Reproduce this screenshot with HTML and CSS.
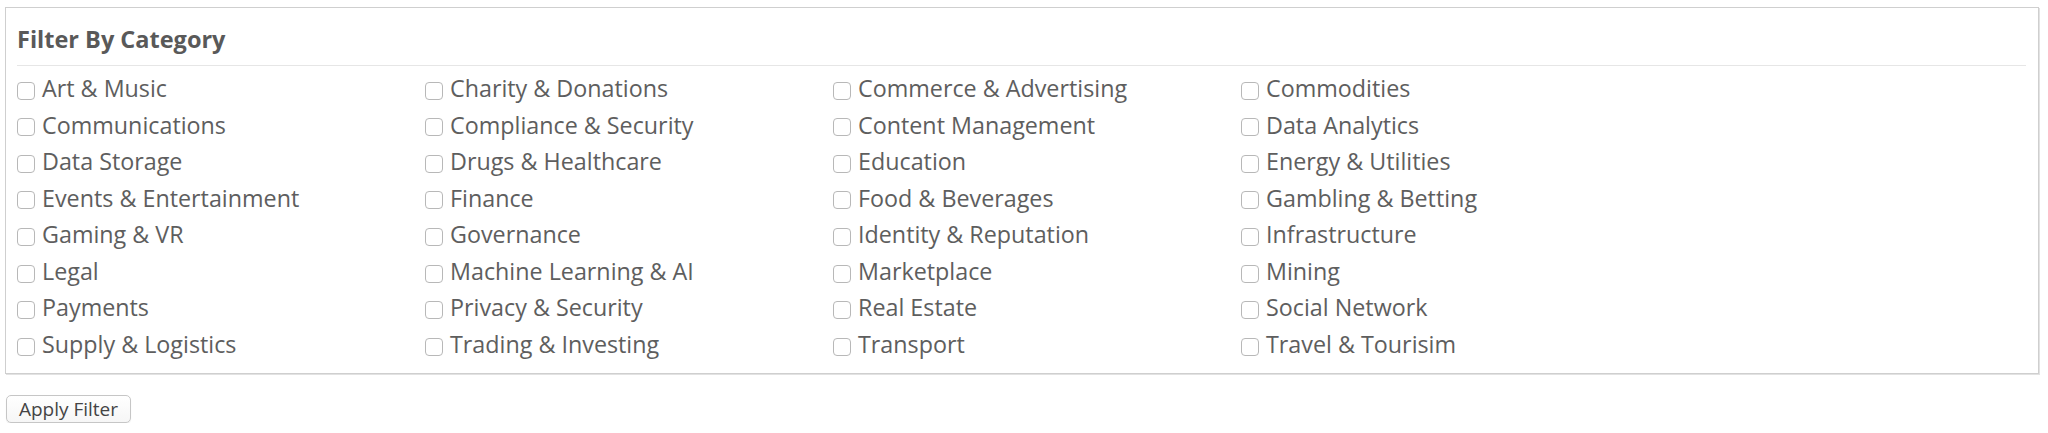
FILE: index.html
```html
<!DOCTYPE html>
<html lang="en">
<head>
    <meta charset="UTF-8">
    <meta name="viewport" content="width=device-width, initial-scale=1.0">
    <title>Filter By Category</title>
    <link rel="stylesheet" href="styles.css">
</head>
<body>
    <form class="filter-form">
        <div class="filter-box">
            <h3 class="filter-title">Filter By Category</h3>
            <div class="category-grid">
                <label class="category"><input type="checkbox"> Art &amp; Music</label>
                <label class="category"><input type="checkbox"> Charity &amp; Donations</label>
                <label class="category"><input type="checkbox"> Commerce &amp; Advertising</label>
                <label class="category"><input type="checkbox"> Commodities</label>

                <label class="category"><input type="checkbox"> Communications</label>
                <label class="category"><input type="checkbox"> Compliance &amp; Security</label>
                <label class="category"><input type="checkbox"> Content Management</label>
                <label class="category"><input type="checkbox"> Data Analytics</label>

                <label class="category"><input type="checkbox"> Data Storage</label>
                <label class="category"><input type="checkbox"> Drugs &amp; Healthcare</label>
                <label class="category"><input type="checkbox"> Education</label>
                <label class="category"><input type="checkbox"> Energy &amp; Utilities</label>

                <label class="category"><input type="checkbox"> Events &amp; Entertainment</label>
                <label class="category"><input type="checkbox"> Finance</label>
                <label class="category"><input type="checkbox"> Food &amp; Beverages</label>
                <label class="category"><input type="checkbox"> Gambling &amp; Betting</label>

                <label class="category"><input type="checkbox"> Gaming &amp; VR</label>
                <label class="category"><input type="checkbox"> Governance</label>
                <label class="category"><input type="checkbox"> Identity &amp; Reputation</label>
                <label class="category"><input type="checkbox"> Infrastructure</label>

                <label class="category"><input type="checkbox"> Legal</label>
                <label class="category"><input type="checkbox"> Machine Learning &amp; AI</label>
                <label class="category"><input type="checkbox"> Marketplace</label>
                <label class="category"><input type="checkbox"> Mining</label>

                <label class="category"><input type="checkbox"> Payments</label>
                <label class="category"><input type="checkbox"> Privacy &amp; Security</label>
                <label class="category"><input type="checkbox"> Real Estate</label>
                <label class="category"><input type="checkbox"> Social Network</label>

                <label class="category"><input type="checkbox"> Supply &amp; Logistics</label>
                <label class="category"><input type="checkbox"> Trading &amp; Investing</label>
                <label class="category"><input type="checkbox"> Transport</label>
                <label class="category"><input type="checkbox"> Travel &amp; Tourisim</label>
            </div>
        </div>
        <button type="button" class="btn-apply">Apply Filter</button>
    </form>
</body>
</html>
```

FILE: styles.css
```css
* {
    margin: 0;
    padding: 0;
    box-sizing: border-box;
}

body {
    font-family: 'Open Sans', 'Liberation Sans', sans-serif;
    background: #fff;
    color: #5a5a5a;
}

.filter-form {
    padding: 7px 10px 0 5px;
}

.filter-box {
    width: 2034px;
    border: 1px solid #cfcfcf;
    box-shadow: 1px 1px 0 #e2e2e2;
    padding: 15px 12px 10px 11px;
}

.filter-title {
    font-size: 23.5px;
    font-weight: 700;
    color: #595959;
    padding-bottom: 10px;
    border-bottom: 1px solid #e6e6e6;
    margin-bottom: 4px;
}

.category-grid {
    display: grid;
    grid-template-columns: repeat(4, 408px);
}

.category {
    display: flex;
    align-items: center;
    gap: 7px;
    font-size: 23.3px;
    line-height: 36.57px;
    color: #5e5e5e;
    white-space: nowrap;
}

.category input {
    appearance: none;
    -webkit-appearance: none;
    width: 18px;
    height: 18px;
    border: 1px solid #b8b8b8;
    border-radius: 4px;
    background: #fff;
    margin-top: 5px;
    flex-shrink: 0;
}

.btn-apply {
    margin: 21px 0 0 1px;
    width: 125px;
    height: 28px;
    font-family: 'Open Sans', 'Liberation Sans', sans-serif;
    font-size: 19px;
    color: #444;
    background: linear-gradient(#fff, #f6f6f6);
    border: 1px solid #c6c6c6;
    border-radius: 5px;
    box-shadow: 0 1px 1px rgba(0, 0, 0, 0.08);
}
```
